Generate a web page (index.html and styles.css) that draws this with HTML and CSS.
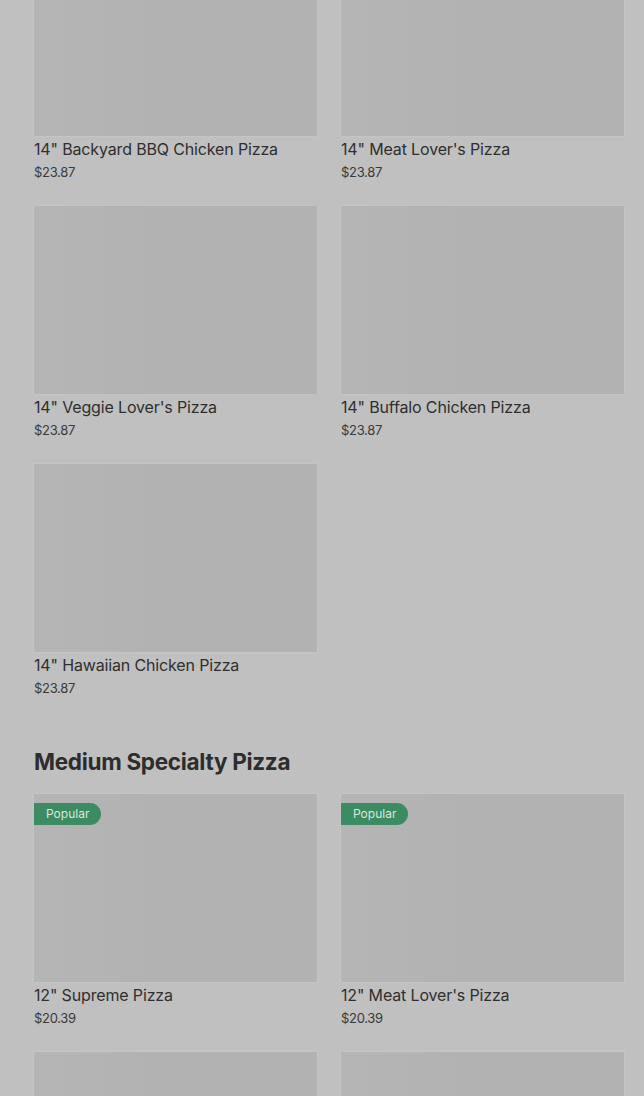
FILE: index.html
```html
<!DOCTYPE html>
<html lang="en">

<head>
  <meta charset="UTF-8" />
  <meta name="viewport" content="width=device-width, initial-scale=1" />
  <title>Menu</title>
  <link rel="stylesheet" href="styles.css">
</head>

<body>
  <div id="menu">
    <div class="itemGrid firstGrid">
      <div class="item">
        <div class="itemImage"></div>
        <div class="itemName">14" Backyard BBQ Chicken Pizza</div>
        <div class="itemPrice">$23.87</div>
      </div>
      <div class="item">
        <div class="itemImage"></div>
        <div class="itemName">14" Meat Lover's Pizza</div>
        <div class="itemPrice">$23.87</div>
      </div>
      <div class="item">
        <div class="itemImage"></div>
        <div class="itemName">14" Veggie Lover's Pizza</div>
        <div class="itemPrice">$23.87</div>
      </div>
      <div class="item">
        <div class="itemImage"></div>
        <div class="itemName">14" Buffalo Chicken Pizza</div>
        <div class="itemPrice">$23.87</div>
      </div>
      <div class="item">
        <div class="itemImage"></div>
        <div class="itemName">14" Hawaiian Chicken Pizza</div>
        <div class="itemPrice">$23.87</div>
      </div>
    </div>

    <div class="section">
      <h2 class="sectionTitle">Medium Specialty Pizza</h2>
      <div class="itemGrid">
        <div class="item">
          <div class="itemImage">
            <span class="badge">Popular</span>
          </div>
          <div class="itemName">12" Supreme Pizza</div>
          <div class="itemPrice">$20.39</div>
        </div>
        <div class="item">
          <div class="itemImage">
            <span class="badge">Popular</span>
          </div>
          <div class="itemName">12" Meat Lover's Pizza</div>
          <div class="itemPrice">$20.39</div>
        </div>
        <div class="item">
          <div class="itemImage"></div>
        </div>
        <div class="item">
          <div class="itemImage"></div>
        </div>
      </div>
    </div>
  </div>
</body>

</html>
```

FILE: styles.css
```css
html {
  background: #c0c0c0;
}

body {
  margin: 0;
  padding: 0;
  background: #c0c0c0;
  font-family: "Inter", "Liberation Sans", sans-serif;
  overflow: hidden;
}

#menu {
  padding-left: 34px;
  padding-right: 20px;
}

.itemGrid {
  display: grid;
  grid-template-columns: 1fr 1fr;
  column-gap: 24px;
  row-gap: 24px;
}

.firstGrid {
  margin-top: -52px;
}

.item {
  display: flex;
  flex-direction: column;
}

.itemImage {
  position: relative;
  height: 188px;
  background: linear-gradient(to right, #b5b5b5, #b2b2b2 40%, #b2b2b2);
  box-shadow: 0 0 0 1px #c4c4c4;
}

.badge {
  position: absolute;
  top: 9px;
  left: 0;
  height: 22px;
  line-height: 22px;
  padding: 0 12px;
  background: #3d8b62;
  color: #d9e7de;
  font-size: 12px;
  border-radius: 0 11px 11px 0;
}

.itemName {
  margin-top: 3px;
  font-size: 16px;
  line-height: 20px;
  letter-spacing: -0.15px;
  color: #2f2f2f;
}

.itemPrice {
  margin-top: 3px;
  font-size: 13px;
  line-height: 20px;
  letter-spacing: -0.3px;
  color: #3a3a3a;
}

.section {
  margin-top: 50px;
}

.sectionTitle {
  margin: 0;
  margin-bottom: 18px;
  font-size: 22.5px;
  line-height: 28px;
  font-weight: 700;
  letter-spacing: -0.3px;
  color: #2d2d2d;
}
```
